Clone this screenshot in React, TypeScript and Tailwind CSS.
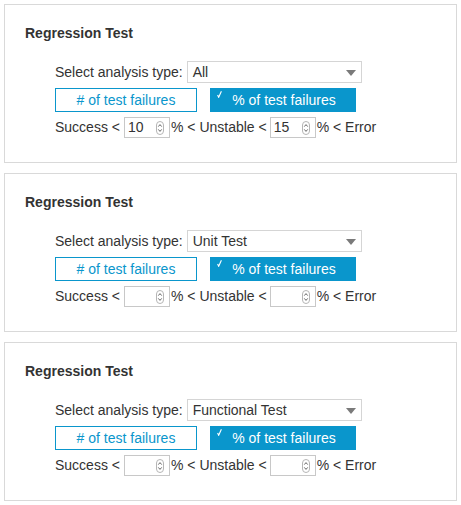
import React from "react";

const Spinner = () => (
  <svg width="8" height="14" viewBox="0 0 8 14" className="absolute right-[5px] top-[3px]">
    <rect x="0.5" y="0.5" width="7" height="13" rx="3.5" fill="#fff" stroke="#b5b5b5" />
    <path d="M2.3 5.6 L4 3.6 L5.7 5.6" fill="none" stroke="#666" strokeWidth="1" />
    <path d="M2.3 8.4 L4 10.4 L5.7 8.4" fill="none" stroke="#666" strokeWidth="1" />
  </svg>
);

const NumberBox = ({ value }: { value: string }) => (
  <div className="relative w-[46px] h-[21px] border border-[#c8c8c8] bg-white pl-[3px] leading-[19px]">
    {value}
    <Spinner />
  </div>
);

const Panel = ({ type, low, high }: { type: string; low: string; high: string }) => {
  return (
    <div className="h-[159px] border border-[#d9d9d9] bg-white pt-[20px] pl-[20px]">
      <p className="font-bold text-[14px] leading-[16px] text-[#333]">Regression Test</p>
      <div className="pl-[30px] mt-[20px] text-[14px] text-[#333]">
        <div className="flex items-center h-[22px]">
          <span className="mr-[4px]">Select analysis type:</span>
          <div className="relative w-[175px] h-[22px] border border-[#d5d5d5] bg-white pl-[5px] leading-[20px]">
            {type}
            <svg width="10" height="6" viewBox="0 0 10 6" className="absolute right-[5px] top-[8px]">
              <path d="M0 0 L10 0 L5 6 Z" fill="#7a7a7a" />
            </svg>
          </div>
        </div>
        <div className="flex mt-[5px] gap-[13px]">
          <button className="w-[142px] h-[24px] border border-[#0a96cc] text-[#0a96cc] bg-white leading-[22px] text-center">
            # of test failures
          </button>
          <button className="relative w-[146px] h-[24px] bg-[#0a96cc] text-white leading-[24px] text-center pl-[2px]">
            <svg width="5" height="7" viewBox="0 0 5 7" className="absolute left-[7px] top-[3px]">
              <path d="M0.6 4 L1.7 6.3 L4.4 0.3" fill="none" stroke="#fff" strokeWidth="1.1" />
            </svg>
            % of test failures
          </button>
        </div>
        <div className="flex items-center h-[21px] mt-[5px] whitespace-pre">
          <span className="mr-[4px]">Success &lt;</span>
          <NumberBox value={low} />
          <span className="ml-[1px] mr-[3px]">% &lt; Unstable &lt;</span>
          <NumberBox value={high} />
          <span className="ml-[1px]">% &lt; Error</span>
        </div>
      </div>
    </div>
  );
};

const App = () => {
  return (
    <div
      className="w-[461px] h-[505px] bg-white px-[4px] pt-[4px] flex flex-col gap-[10px]"
      style={{ fontFamily: '"Liberation Sans", Arial, sans-serif' }}
    >
      <Panel type="All" low="10" high="15" />
      <Panel type="Unit Test" low="" high="" />
      <Panel type="Functional Test" low="" high="" />
    </div>
  );
};

export default App;
